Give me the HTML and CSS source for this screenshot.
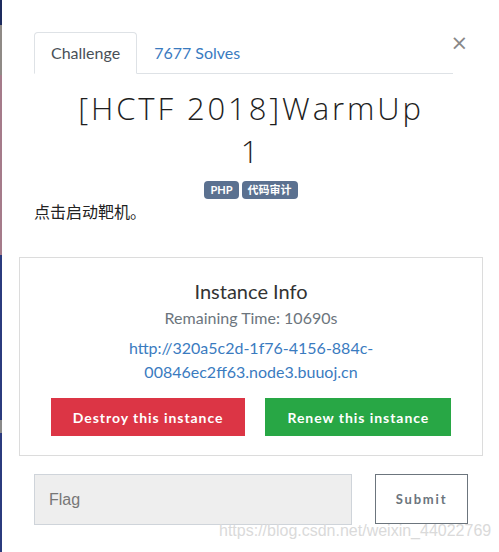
FILE: index.html
```html
<!DOCTYPE html>
<html lang="en">

<head>
    <meta charset="UTF-8">
    <meta name="viewport" content="width=device-width, initial-scale=1.0">
    <title>[HCTF 2018]WarmUp</title>
    <link rel="stylesheet" href="styles.css">
</head>

<body>
    <div class="backdrop"></div>
    <div class="modal">
        <button class="close" type="button">&times;</button>
        <ul class="tabs">
            <li class="tab active">Challenge</li>
            <li class="tab">7677 Solves</li>
        </ul>
        <h2 class="title">[HCTF 2018]WarmUp<br>1</h2>
        <div class="tags">
            <span class="badge">PHP</span>
            <span class="badge">代码审计</span>
        </div>
        <p class="desc">点击启动靶机。</p>
        <div class="instance">
            <h4>Instance Info</h4>
            <p class="remaining">Remaining Time: 10690s</p>
            <a class="url" href="#">http://320a5c2d-1f76-4156-884c-<br>00846ec2ff63.node3.buuoj.cn</a>
            <div class="actions">
                <button class="btn danger" type="button">Destroy this instance</button>
                <button class="btn success" type="button">Renew this instance</button>
            </div>
        </div>
        <form class="answer">
            <input class="flag" type="text" placeholder="Flag">
            <button class="submit" type="button">Submit</button>
        </form>
        <span class="watermark">https://blog.csdn.net/weixin_44022769</span>
    </div>
</body>

</html>
```

FILE: styles.css
```css
body {
    margin: 0;
    display: flex;
    min-height: 552px;
    background: #fff;
    font-family: Lato, "Noto Sans CJK SC", sans-serif;
    font-size: 16px;
    color: #333;
}

.backdrop {
    width: 2px;
    flex: none;
    background: linear-gradient(to bottom, #1d2b5e 0 25px, #8f8a86 25px 75px, #a57b8a 75px 255px, #2b3b7e 255px 420px, #8a8a8a 420px 433px, #2b3b7e 433px);
}

.modal {
    position: relative;
    flex: 1;
    padding: 32px 31px 0 32px;
}

.close {
    position: absolute;
    top: 31px;
    right: 31px;
    padding: 0;
    border: 0;
    background: none;
    font-family: "DejaVu Sans", sans-serif;
    font-size: 21px;
    color: #888;
}

.tabs {
    display: flex;
    margin: 0 15px 0 0;
    padding: 0;
    list-style: none;
    border-bottom: 1px solid #dee2e6;
}

.tab {
    padding: 8px 16px;
    margin-bottom: -1px;
    border: 1px solid transparent;
    font-size: 16px;
    line-height: 24px;
    color: #3a7bbf;
}

.tab.active {
    color: #495057;
    border-color: #dee2e6 #dee2e6 #fff;
    border-radius: 4px 4px 0 0;
}

.title {
    margin: 13px 0 0;
    text-align: center;
    font-family: "Open Sans", sans-serif;
    font-size: 31px;
    font-weight: 300;
    line-height: 43px;
    letter-spacing: 2.9px;
    color: #1e1e1e;
}

.tags {
    display: flex;
    justify-content: center;
    gap: 3px;
    margin-top: 8px;
}

.badge {
    padding: 0 6px;
    border-radius: 4px;
    background: #5b7190;
    color: #fff;
    font-size: 11px;
    font-weight: bold;
    line-height: 18px;
}

.desc {
    margin: 1px 0 0;
    font-size: 16px;
    line-height: 24px;
    color: #222;
}

.instance {
    margin: 33px -15px 0;
    padding: 20px 0 19px;
    border: 1px solid #dcdcdc;
    text-align: center;
}

.instance h4 {
    margin: 0;
    font-size: 20px;
    font-weight: normal;
    line-height: 26px;
    color: #333;
}

.remaining {
    margin: 3px 0 7px;
    line-height: 22px;
    color: #6c757d;
}

.url {
    display: block;
    line-height: 24px;
    color: #3a7bbf;
    text-decoration: none;
}

.actions {
    display: flex;
    justify-content: center;
    gap: 20px;
    margin-top: 14px;
}

.btn {
    height: 38px;
    padding: 0 22px;
    border: 0;
    font-family: Lato, sans-serif;
    font-size: 14px;
    font-weight: bold;
    letter-spacing: 0.95px;
    color: #fff;
}

.danger {
    background: #dc3545;
}

.success {
    background: #28a745;
}

.answer {
    display: flex;
    gap: 23px;
    margin-top: 18px;
}

.flag {
    width: 318px;
    height: 51px;
    box-sizing: border-box;
    padding: 0 14px;
    border: 1px solid #cfd4da;
    background: #eee;
    font-family: "Liberation Sans", sans-serif;
    font-size: 16px;
}

.flag::placeholder {
    color: #777;
}

.submit {
    width: 93px;
    height: 50px;
    border: 1px solid #6c757d;
    background: #fff;
    font-family: Lato, sans-serif;
    font-size: 13px;
    font-weight: bold;
    letter-spacing: 1.8px;
    color: #6c757d;
}

.watermark {
    position: absolute;
    left: 217px;
    top: 522px;
    font-family: "Liberation Sans", sans-serif;
    font-size: 16px;
    color: #dadada;
    white-space: nowrap;
}
```
